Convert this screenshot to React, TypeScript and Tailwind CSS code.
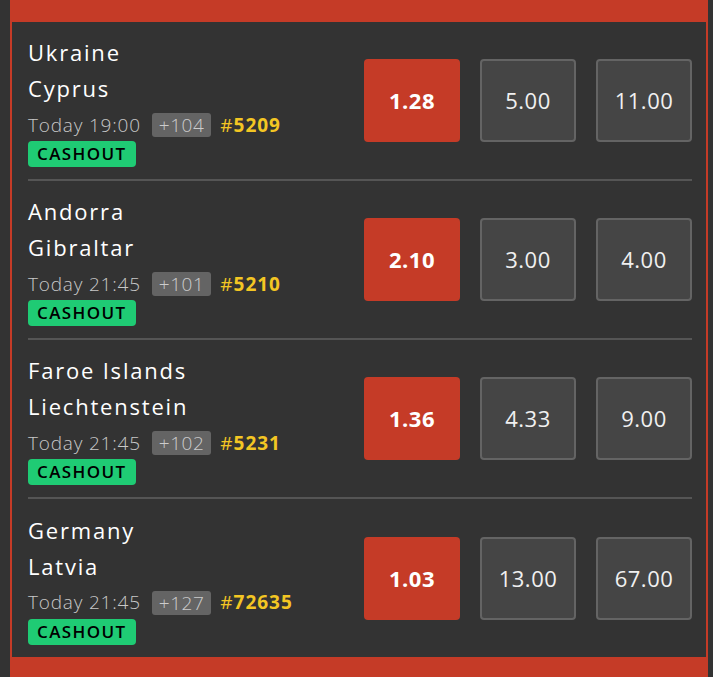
import React from "react";

const matches = [
  { home: "Ukraine", away: "Cyprus", time: "Today 19:00", more: "+104", code: "5209", odds: ["1.28", "5.00", "11.00"] },
  { home: "Andorra", away: "Gibraltar", time: "Today 21:45", more: "+101", code: "5210", odds: ["2.10", "3.00", "4.00"] },
  { home: "Faroe Islands", away: "Liechtenstein", time: "Today 21:45", more: "+102", code: "5231", odds: ["1.36", "4.33", "9.00"] },
  { home: "Germany", away: "Latvia", time: "Today 21:45", more: "+127", code: "72635", odds: ["1.03", "13.00", "67.00"] },
];

function OddButton({ value, active }: { value: string; active?: boolean }) {
  return (
    <button
      className={
        active
          ? "w-[96px] h-[83px] rounded-[4px] bg-[#c53b27] text-white font-bold text-[22px] tracking-[0.5px] flex items-center justify-center"
          : "w-[96px] h-[83px] rounded-[4px] bg-[#454545] border-2 border-[#646464] text-[#f0f0f0] text-[22px] tracking-[0.5px] flex items-center justify-center"
      }
    >
      {value}
    </button>
  );
}

export default function App() {
  return (
    <div
      className="w-[713px] h-[677px] bg-[#333333] pl-[10px] pr-[5px] overflow-hidden"
      style={{ fontFamily: "'Open Sans', 'Noto Sans', sans-serif" }}
    >
      <div className="h-full border-x-2 border-[#c53b27] flex flex-col">
        <div className="h-[22px] shrink-0 bg-[#c53b27]" />
        <div className="flex-1 min-h-0 flex flex-col pl-[16px] pr-[14px]">
          {matches.map((m, i) => (
            <div
              key={m.code}
              className={
                i < matches.length - 1
                  ? "h-[159px] shrink-0 flex items-center justify-between py-[11px] border-b-2 border-[#555555]"
                  : "flex-1 flex items-center justify-between py-[11px]"
              }
            >
              <div className="flex flex-col">
                <div className="text-[22px] leading-[36px] tracking-[1.8px] text-white">{m.home}</div>
                <div className="text-[22px] leading-[36px] tracking-[1.8px] text-white">{m.away}</div>
                <div className="flex items-center h-[32px] mt-[3px]">
                  <span className="text-[19px] font-light tracking-[0.8px] text-[#c8c8c8]">{m.time}</span>
                  <span className="ml-[11px] px-[7px] h-[24px] rounded-[3px] bg-[#646464] text-[#cccccc] text-[19px] font-light tracking-[0.5px] leading-[24px]">
                    {m.more}
                  </span>
                  <span className="ml-[9px] text-[19px] tracking-[1px] text-[#f3c623]">
                    #<span className="font-bold">{m.code}</span>
                  </span>
                </div>
                <div>
                  <span className="inline-block px-[9px] h-[26px] leading-[26px] rounded-[4px] bg-[#1fcb74] text-black font-semibold text-[17px] tracking-[1.4px]">
                    CASHOUT
                  </span>
                </div>
              </div>
              <div className="flex gap-[20px]">
                {m.odds.map((o, j) => (
                  <OddButton key={j} value={o} active={j === 0} />
                ))}
              </div>
            </div>
          ))}
        </div>
        <div className="h-[20px] shrink-0 bg-[#c53b27]" />
      </div>
    </div>
  );
}
